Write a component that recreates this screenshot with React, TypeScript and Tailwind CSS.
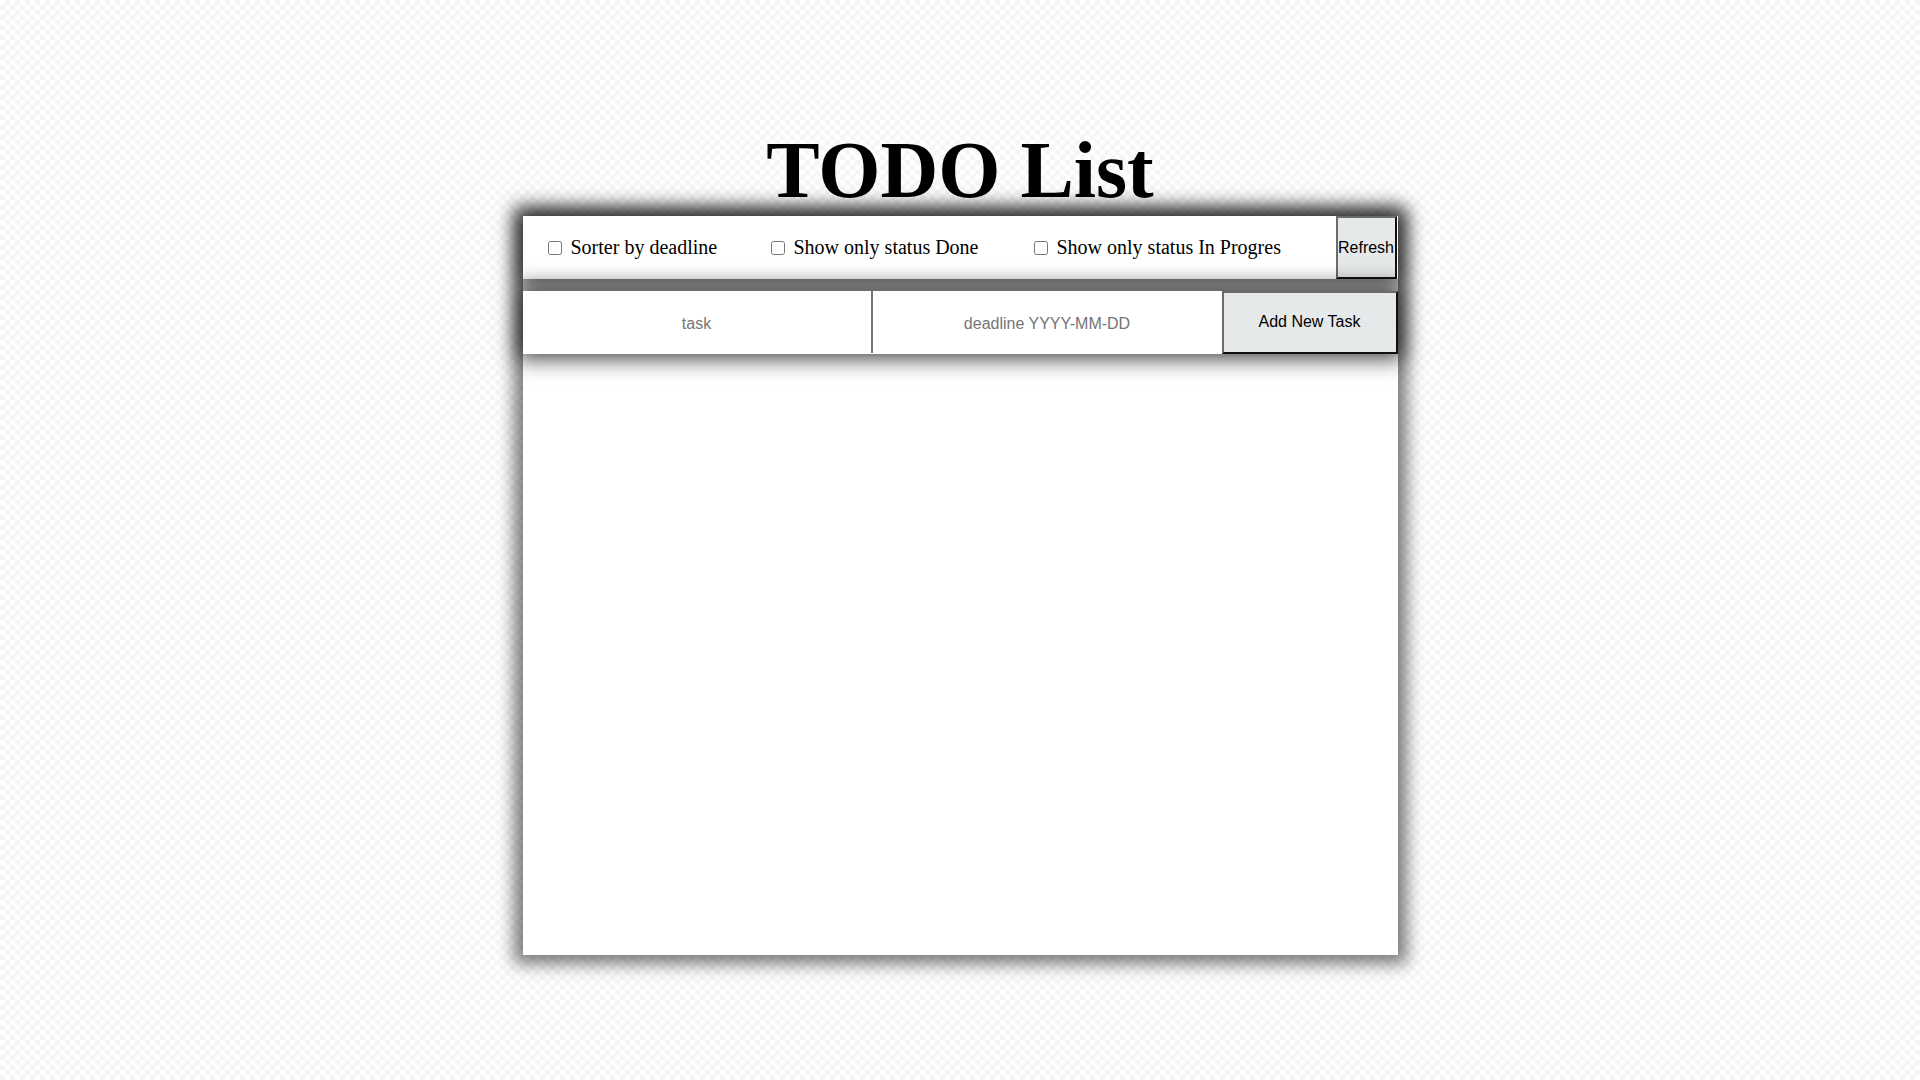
import React from "react";

export default function App() {
  return (
    <div className="min-h-screen w-full bg-white bg-[image:repeating-conic-gradient(#f6f6f6_0%_25%,#ffffff_0%_50%)] bg-[length:10px_10px] pt-[126px]">
      <h1 className="text-center font-['Liberation_Serif',serif] text-[80px] font-bold leading-[88px] text-black">
        TODO List
      </h1>
      <div className="mx-auto mt-[2px] flex h-[739px] w-[875px] flex-col bg-white shadow-[0_0_16px_9px_rgba(0,0,0,0.52)]">
        <div className="relative flex h-[63px] shrink-0 items-stretch bg-white shadow-[0_0_20px_5px_rgba(0,0,0,0.72)]">
          <label className="ml-[25px] flex w-[223px] items-center font-['Liberation_Serif',serif] text-[20px] leading-[23px] text-black">
            <input type="checkbox" className="m-0 h-[14px] w-[14px] shrink-0" />
            <span className="ml-[9px] whitespace-nowrap">Sorter by deadline</span>
          </label>
          <label className="flex w-[263px] items-center font-['Liberation_Serif',serif] text-[20px] leading-[23px] text-black">
            <input type="checkbox" className="m-0 h-[14px] w-[14px] shrink-0" />
            <span className="ml-[9px] whitespace-nowrap">Show only status Done</span>
          </label>
          <label className="flex w-[302px] items-center font-['Liberation_Serif',serif] text-[20px] leading-[23px] text-black">
            <input type="checkbox" className="m-0 h-[14px] w-[14px] shrink-0" />
            <span className="ml-[9px] whitespace-nowrap">Show only status In Progres</span>
          </label>
          <button className="ml-auto mr-[1px] w-[61px] overflow-hidden whitespace-nowrap border-2 border-t-[#6b6b6b] border-l-[#6b6b6b] border-r-[#111111] border-b-[#111111] bg-[#e6e9ea] p-0 text-center font-['Liberation_Sans',sans-serif] text-[16px] text-black">
            Refresh
          </button>
        </div>
        <div className="relative mt-[12px] flex h-[63px] shrink-0 items-stretch bg-white shadow-[0_0_20px_5px_rgba(0,0,0,0.72)]">
          <input
            type="text"
            placeholder="task"
            className="h-[62px] w-[350px] border-0 border-r-2 border-r-[#767676] bg-white pt-[4px] text-center font-['Liberation_Sans',sans-serif] text-[16px] text-black outline-none placeholder:text-[#757575]"
          />
          <input
            type="text"
            placeholder="deadline YYYY-MM-DD"
            className="h-[62px] w-[349px] border-0 bg-white pt-[4px] text-center font-['Liberation_Sans',sans-serif] text-[16px] text-black outline-none placeholder:text-[#757575]"
          />
          <button className="w-[176px] border-2 border-t-[#6b6b6b] border-l-[#6b6b6b] border-r-[#111111] border-b-[#111111] bg-[#e6e9ea] p-0 pb-[2px] text-center font-['Liberation_Sans',sans-serif] text-[16px] text-black">
            Add New Task
          </button>
        </div>
        <div className="flex-1 bg-white"></div>
      </div>
    </div>
  );
}
